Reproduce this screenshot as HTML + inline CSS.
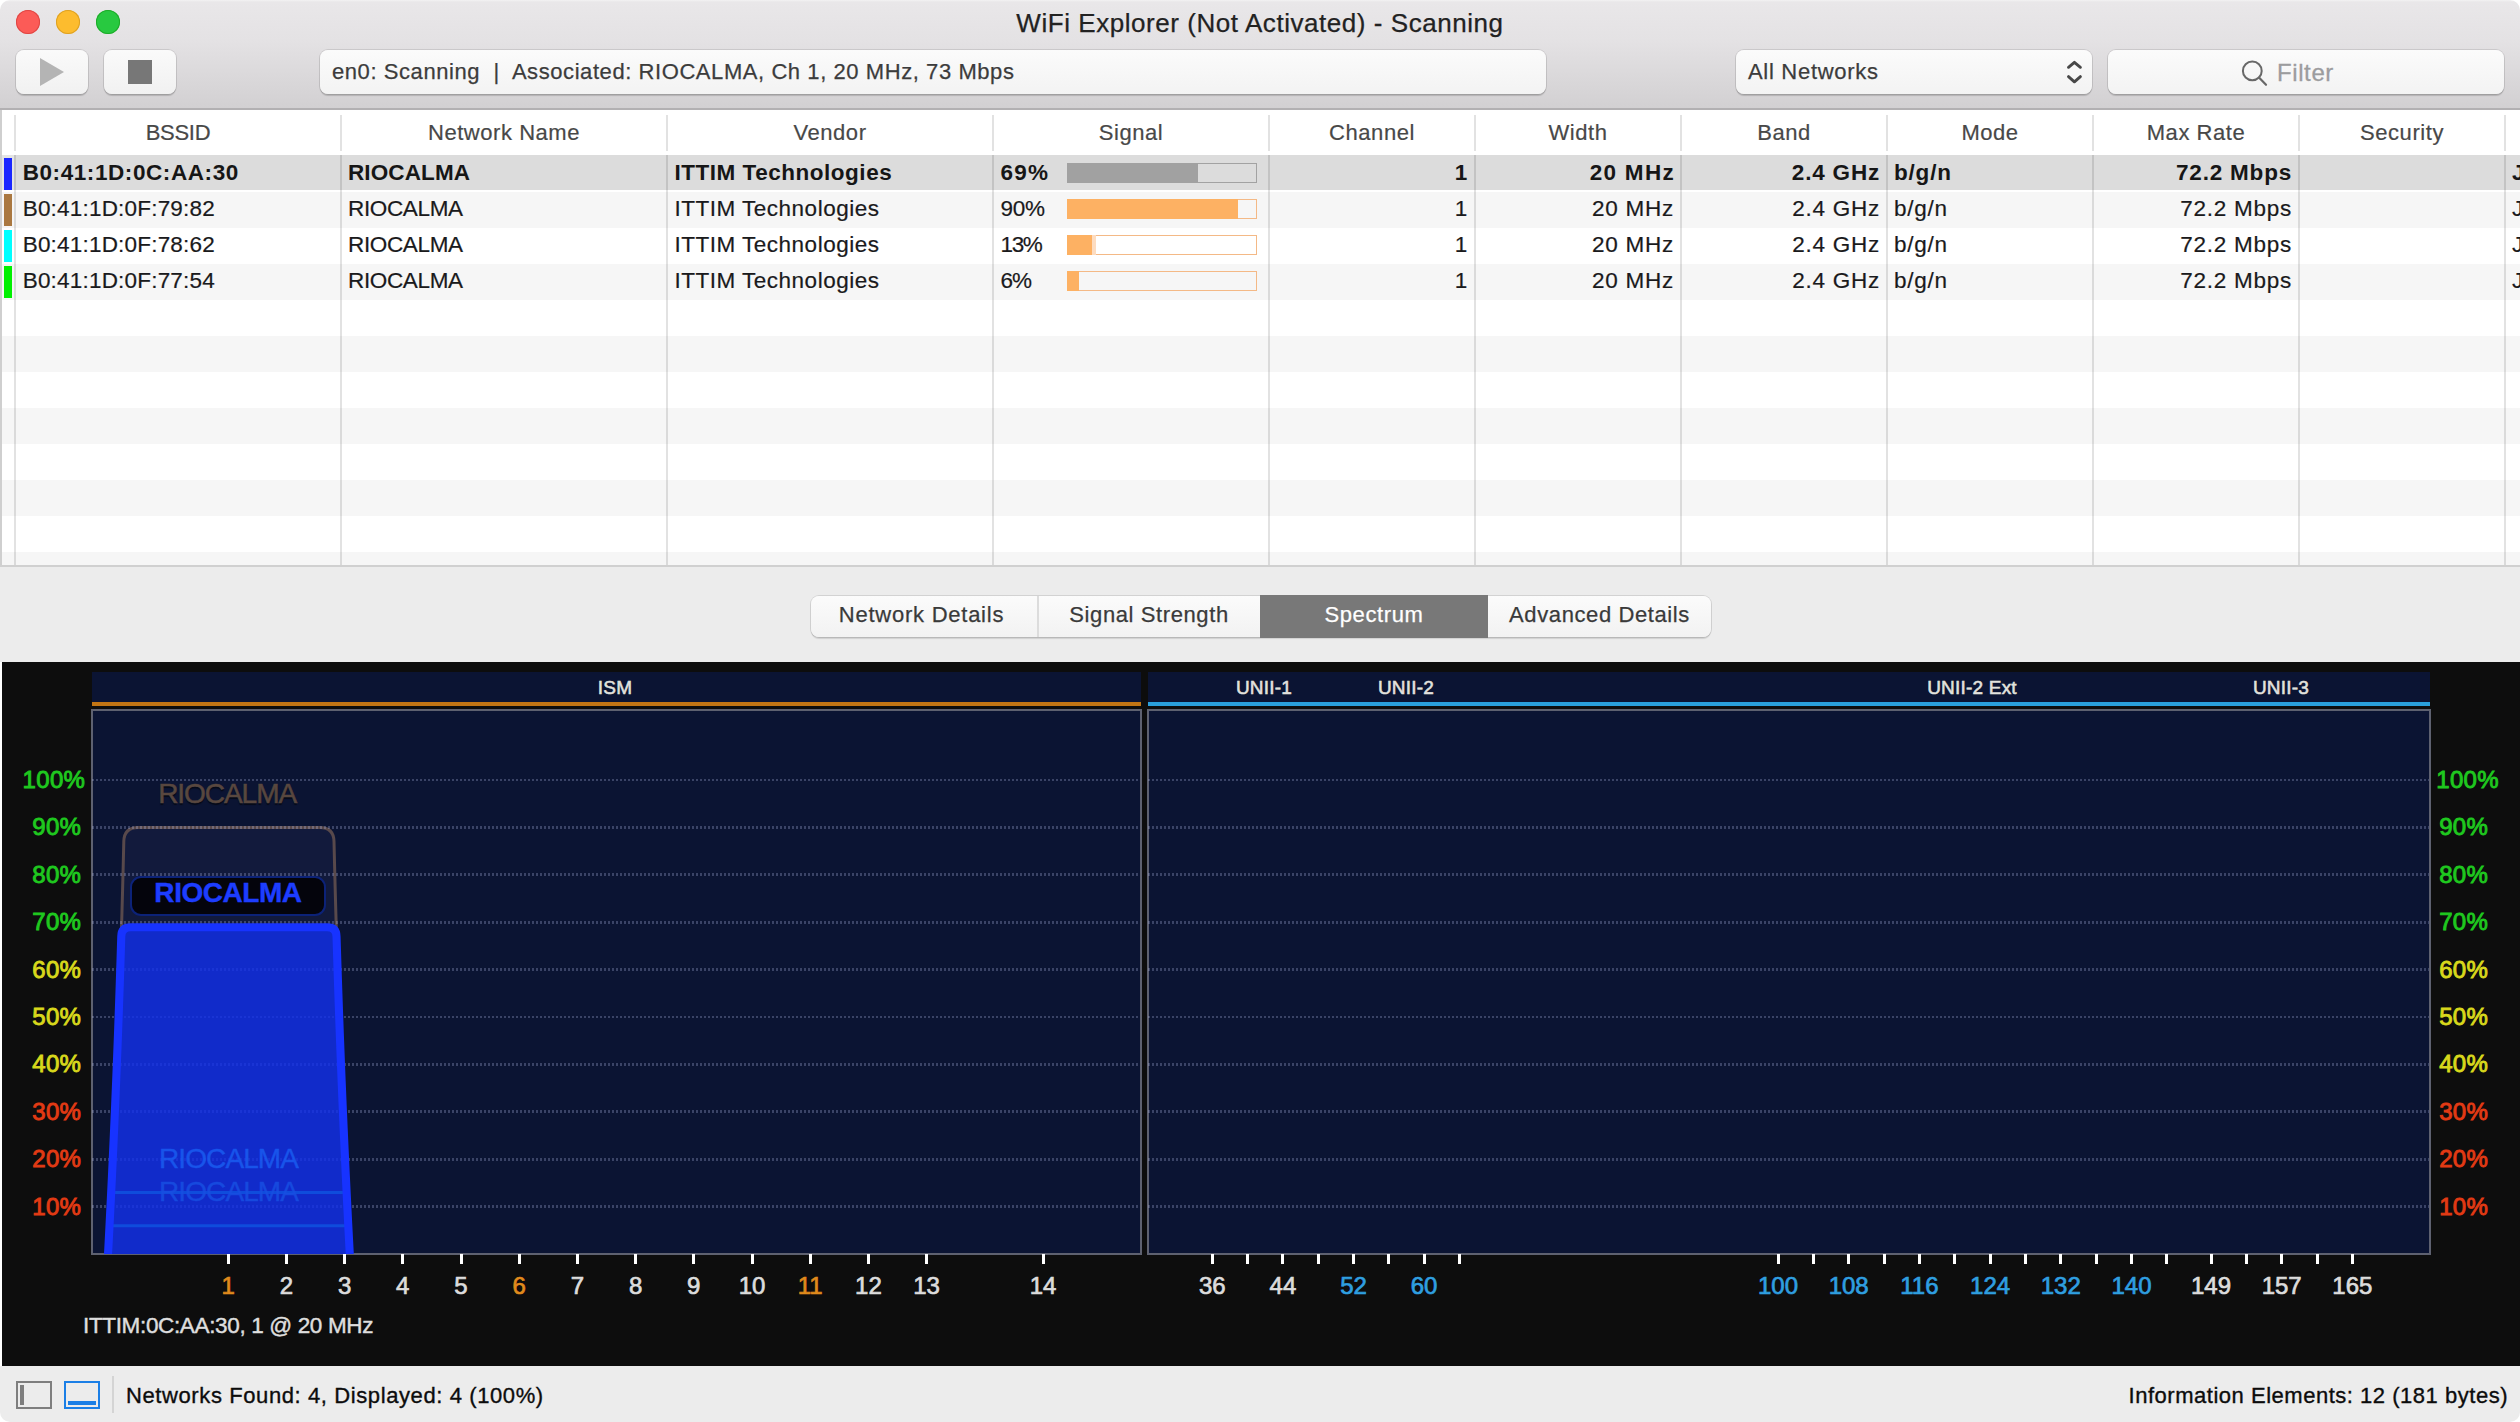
<!DOCTYPE html>
<html>
<head>
<meta charset="utf-8">
<title>WiFi Explorer</title>
<style>
*{box-sizing:border-box;margin:0;padding:0}
html,body{width:2520px;height:1422px;overflow:hidden;background:#fff}
body{font-family:"Liberation Sans",sans-serif;position:relative;color:#1e1e1e}
.abs{position:absolute}
#win{position:absolute;left:0;top:0;width:2520px;height:1422px;overflow:hidden;border-radius:10px 10px 10px 10px;background:#fff}

/* ---------- title / toolbar ---------- */
#tb{left:0;top:0;width:2520px;height:110px;background:linear-gradient(#f3f2f3 0px,#e9e7e9 2px,#e4e2e4 40px,#d2d0d2 108px);border-bottom:2px solid #b2b0b2}
.tl{position:absolute;top:10px;width:24px;height:24px;border-radius:50%}
#title{left:0;top:7px;width:2520px;text-align:center;font-size:26px;line-height:32px;color:#222;letter-spacing:0.55px;-webkit-text-stroke:0.25px #222}
.btn{position:absolute;top:50px;height:44px;border-radius:8px;background:linear-gradient(#fafafa,#f1f1f1);box-shadow:0 0 0 1px rgba(0,0,0,0.10),0 2px 1px rgba(0,0,0,0.16)}
.fld{position:absolute;top:50px;height:44px;border-radius:8px;background:linear-gradient(#fbfbfb,#f3f3f3);box-shadow:0 0 0 1px rgba(0,0,0,0.10),0 2px 1px rgba(0,0,0,0.16);font-size:22px;line-height:44px;color:#3c3c3c;white-space:pre;-webkit-text-stroke:0.25px #3c3c3c}

/* ---------- table ---------- */
#tbl{left:0;top:110px;width:2520px;height:456px;background:#fff;overflow:hidden}
.hd{position:absolute;top:11px;height:24px;line-height:24px;font-size:22px;color:#484848;-webkit-text-stroke:0.2px #484848;text-align:center;letter-spacing:0.55px;white-space:nowrap}
.hs{position:absolute;top:5px;width:2px;height:36px;background:#e2e2e2}
.vs{position:absolute;top:45px;width:2px;height:412px;background:rgba(0,0,0,0.115)}
.row{position:absolute;left:2px;width:2518px;height:36px}
.c{position:absolute;top:0;height:36px;line-height:33px;font-size:22.5px;color:#1a1a1c;white-space:nowrap;letter-spacing:0.75px;-webkit-text-stroke:0.2px #1a1a1c}
.r{text-align:right}
.b .c{font-weight:bold;letter-spacing:0.8px;color:#161616;-webkit-text-stroke:0}
.sw{position:absolute;left:2px;top:2px;width:8px;height:32px}
.bar{position:absolute;left:1065px;top:7px;width:190px;height:20px;box-shadow:inset 0 0 0 1px #f4b986}
.bar i{position:absolute;left:0;top:0;height:20px;background:#fdb163}

/* ---------- tabs ---------- */
#tabs{left:0;top:565px;width:2520px;height:97px;background:#ececec;border-top:2px solid #d0d0d0}
#seg{position:absolute;left:811px;top:29px;width:900px;height:41px;border-radius:8px;background:linear-gradient(#fbfbfb,#f2f2f2);box-shadow:0 0 0 1px rgba(0,0,0,0.11),0 2px 1px rgba(0,0,0,0.12)}
.sg{position:absolute;top:0;height:41px;line-height:37px;font-size:22px;color:#3a3a3a;text-align:center;letter-spacing:0.6px;-webkit-text-stroke:0.25px currentColor}

/* ---------- spectrum ---------- */
#sp{left:2px;top:662px;width:2518px;height:704px;background:#0d0d0d}
.pl{position:absolute;font-size:24px;line-height:24px;height:24px;white-space:nowrap;-webkit-text-stroke:0.9px currentColor;letter-spacing:0.3px}
.cl{position:absolute;top:611px;width:80px;margin-left:-40px;text-align:center;font-size:24px;line-height:26px;color:#dcdcdc;-webkit-text-stroke:0.7px currentColor}
.bl{position:absolute;top:14.5px;font-size:19px;line-height:22px;color:#e2e2de;width:120px;margin-left:-60px;text-align:center;-webkit-text-stroke:0.55px currentColor;letter-spacing:0.2px}

/* ---------- status ---------- */
#st{left:0;top:1366px;width:2520px;height:56px;background:#ececec}
.stt{position:absolute;top:17px;font-size:22px;line-height:26px;color:#0c0c0c;letter-spacing:0.6px;white-space:nowrap;-webkit-text-stroke:0.35px #0c0c0c}
</style>
</head>
<body>
<div id="win">

<!-- TOOLBAR -->
<div id="tb" class="abs">
  <div class="tl" style="left:16px;background:#fc5b57;box-shadow:inset 0 0 0 1px #df4744"></div>
  <div class="tl" style="left:56px;background:#fdbc2e;box-shadow:inset 0 0 0 1px #dea123"></div>
  <div class="tl" style="left:96px;background:#28c940;box-shadow:inset 0 0 0 1px #1eab29"></div>
  <div id="title" class="abs">WiFi Explorer (Not Activated) - Scanning</div>
  <div class="btn" style="left:16px;width:72px">
    <svg class="abs" style="left:0;top:0" width="72" height="44"><path d="M24 8 L48 22 L24 36 Z" fill="#b4b4b4"/></svg>
  </div>
  <div class="btn" style="left:104px;width:72px">
    <div class="abs" style="left:24px;top:10px;width:24px;height:24px;background:#777"></div>
  </div>
  <div class="fld" style="left:320px;width:1226px;padding-left:12px;letter-spacing:0.57px">en0: Scanning  |  Associated: RIOCALMA, Ch 1, 20 MHz, 73 Mbps</div>
  <div class="fld" style="left:1736px;width:356px;padding-left:12px;letter-spacing:0.7px">All Networks
    <svg class="abs" style="left:328px;top:9px" width="20" height="28"><path d="M4.5 8.3 L10.4 3.3 L16.4 8.3 M4.5 17.6 L10.4 22.8 L16.4 17.6" fill="none" stroke="#484848" stroke-width="2.9" stroke-linecap="round" stroke-linejoin="round"/></svg>
  </div>
  <div class="fld" style="left:2108px;width:396px">
    <svg class="abs" style="left:133px;top:10px" width="30" height="30"><circle cx="11.3" cy="10.9" r="9.4" fill="none" stroke="#686868" stroke-width="2"/><path d="M18 17.6 L25 24.8" stroke="#686868" stroke-width="2.2" stroke-linecap="round"/></svg>
    <span class="abs" style="left:169px;top:1px;font-size:24px;color:#9c9c9e;letter-spacing:0.6px;-webkit-text-stroke:0.3px #9c9c9e">Filter</span>
  </div>
</div>

<!-- TABLE -->
<div id="tbl" class="abs">
  <div class="abs" style="left:0;top:0;width:2px;height:457px;background:#cfcfcf"></div>
  <div class="row b" style="top:46px;background:transparent"><div class="abs" style="left:0;top:-1px;width:12px;height:35px;background:#e4e4e4"></div><div class="abs" style="left:12px;top:-1px;width:2506px;height:35px;background:#dcdcdc"></div><div class="sw" style="background:#1a26ff"></div><div class="c" style="left:20.7px;letter-spacing:0.58px">B0:41:1D:0C:AA:30</div><div class="c" style="left:346px;letter-spacing:0.12px">RIOCALMA</div><div class="c" style="left:672.5px;letter-spacing:0.52px">ITTIM Technologies</div><div class="c" style="left:998.5px;letter-spacing:1.2px">69%</div><div class="bar" style="box-shadow:inset 0 0 0 1px #a2a2a2"><i style="width:130.8px;background:#a1a1a1"></i></div><div class="c r" style="left:1268px;width:198px">1</div><div class="c r" style="left:1474px;width:198px;letter-spacing:1.3px;width:199px">20 MHz</div><div class="c r" style="left:1680px;width:198px">2.4 GHz</div><div class="c" style="left:1892px">b/g/n</div><div class="c r" style="left:2092px;width:198px">72.2 Mbps</div><div class="c" style="left:2510px">J</div></div>
  <div class="row" style="top:82px;background:#f6f6f6"><div class="sw" style="background:#aa7840"></div><div class="c" style="left:20.7px;letter-spacing:0.2px">B0:41:1D:0F:79:82</div><div class="c" style="left:346px;letter-spacing:-0.35px">RIOCALMA</div><div class="c" style="left:672.5px;letter-spacing:0.5px">ITTIM Technologies</div><div class="c" style="left:998.5px;letter-spacing:-0.3px">90%</div><div class="bar"><i style="width:170.6px"></i></div><div class="c r" style="left:1268px;width:198px">1</div><div class="c r" style="left:1474px;width:198px">20 MHz</div><div class="c r" style="left:1680px;width:198px">2.4 GHz</div><div class="c" style="left:1892px">b/g/n</div><div class="c r" style="left:2092px;width:198px">72.2 Mbps</div><div class="c" style="left:2510px">J</div></div>
  <div class="row" style="top:118px;background:#ffffff"><div class="sw" style="background:#00ffff"></div><div class="c" style="left:20.7px;letter-spacing:0.2px">B0:41:1D:0F:78:62</div><div class="c" style="left:346px;letter-spacing:-0.35px">RIOCALMA</div><div class="c" style="left:672.5px;letter-spacing:0.5px">ITTIM Technologies</div><div class="c" style="left:998.5px;letter-spacing:-1.35px">13%</div><div class="bar"><i style="width:24.6px"></i><i style="left:24.7px;width:4px;background:#fddcc0"></i></div><div class="c r" style="left:1268px;width:198px">1</div><div class="c r" style="left:1474px;width:198px">20 MHz</div><div class="c r" style="left:1680px;width:198px">2.4 GHz</div><div class="c" style="left:1892px">b/g/n</div><div class="c r" style="left:2092px;width:198px">72.2 Mbps</div><div class="c" style="left:2510px">J</div></div>
  <div class="row" style="top:154px;background:#f6f6f6"><div class="sw" style="background:#00f000"></div><div class="c" style="left:20.7px;letter-spacing:0.2px">B0:41:1D:0F:77:54</div><div class="c" style="left:346px;letter-spacing:-0.35px">RIOCALMA</div><div class="c" style="left:672.5px;letter-spacing:0.5px">ITTIM Technologies</div><div class="c" style="left:998.5px;letter-spacing:-1.0px">6%</div><div class="bar"><i style="width:12.0px"></i></div><div class="c r" style="left:1268px;width:198px">1</div><div class="c r" style="left:1474px;width:198px">20 MHz</div><div class="c r" style="left:1680px;width:198px">2.4 GHz</div><div class="c" style="left:1892px">b/g/n</div><div class="c r" style="left:2092px;width:198px">72.2 Mbps</div><div class="c" style="left:2510px">J</div></div>
  <div class="row" style="top:190px;background:#ffffff"></div>
  <div class="row" style="top:226px;background:#f6f6f6"></div>
  <div class="row" style="top:262px;background:#ffffff"></div>
  <div class="row" style="top:298px;background:#f6f6f6"></div>
  <div class="row" style="top:334px;background:#ffffff"></div>
  <div class="row" style="top:370px;background:#f6f6f6"></div>
  <div class="row" style="top:406px;background:#ffffff"></div>
  <div class="row" style="top:442px;background:#f6f6f6"></div>
  <div class="hs" style="left:14px"></div>
  <div class="vs" style="left:14px"></div>
  <div class="hs" style="left:340px"></div>
  <div class="vs" style="left:340px"></div>
  <div class="hs" style="left:666px"></div>
  <div class="vs" style="left:666px"></div>
  <div class="hs" style="left:992px"></div>
  <div class="vs" style="left:992px"></div>
  <div class="hs" style="left:1268px"></div>
  <div class="vs" style="left:1268px"></div>
  <div class="hs" style="left:1474px"></div>
  <div class="vs" style="left:1474px"></div>
  <div class="hs" style="left:1680px"></div>
  <div class="vs" style="left:1680px"></div>
  <div class="hs" style="left:1886px"></div>
  <div class="vs" style="left:1886px"></div>
  <div class="hs" style="left:2092px"></div>
  <div class="vs" style="left:2092px"></div>
  <div class="hs" style="left:2298px"></div>
  <div class="vs" style="left:2298px"></div>
  <div class="hs" style="left:2504px"></div>
  <div class="vs" style="left:2504px"></div>
  <div class="hd" style="left:16px;width:324px;letter-spacing:-0.3px">BSSID</div>
  <div class="hd" style="left:342px;width:324px">Network Name</div>
  <div class="hd" style="left:668px;width:324px">Vendor</div>
  <div class="hd" style="left:994px;width:274px">Signal</div>
  <div class="hd" style="left:1270px;width:204px">Channel</div>
  <div class="hd" style="left:1476px;width:204px">Width</div>
  <div class="hd" style="left:1682px;width:204px">Band</div>
  <div class="hd" style="left:1888px;width:204px">Mode</div>
  <div class="hd" style="left:2094px;width:204px">Max Rate</div>
  <div class="hd" style="left:2300px;width:204px">Security</div>
</div>

<!-- TABS -->
<div id="tabs" class="abs">
  <div id="seg">
    <div class="sg" style="left:0;width:221px;letter-spacing:0.75px">Network Details</div>
    <div class="abs" style="left:226px;top:0;width:2px;height:41px;background:#dcdcdc"></div>
    <div class="sg" style="left:227px;width:222px">Signal Strength</div>
    <div class="sg" style="left:449px;width:228px;background:#787878;color:#fff;height:43px;top:-1px;line-height:39px">Spectrum</div>
    <div class="sg" style="left:677px;width:223px">Advanced Details</div>
  </div>
</div>

<!-- SPECTRUM -->
<div id="sp" class="abs">
  <div class="abs" style="left:90px;top:10px;width:1049px;height:30px;background:#0b1433"></div>
  <div class="abs" style="left:90px;top:40px;width:1049px;height:4px;background:#c27514"></div>
  <div class="abs" style="left:1146px;top:10px;width:1282px;height:30px;background:#0b1433"></div>
  <div class="abs" style="left:1146px;top:40px;width:1282px;height:4px;background:#2a9fdc"></div>
  <div class="bl" style="left:613px">ISM</div>
  <div class="bl" style="left:1262px">UNII-1</div>
  <div class="bl" style="left:1404px">UNII-2</div>
  <div class="bl" style="left:1970px">UNII-2 Ext</div>
  <div class="bl" style="left:2279px">UNII-3</div>
  <div class="abs" style="left:89px;top:47px;width:1051px;height:546px;background:#0b1433;border:2px solid #5e6170"></div>
  <div class="abs" style="left:1145px;top:47px;width:1284px;height:546px;background:#0b1433;border:2px solid #5e6170"></div>
  <svg class="abs" style="left:0;top:0" width="2518" height="704" viewBox="2 662 2518 704">
  <defs><clipPath id="cl"><rect x="93" y="711" width="1047" height="543"/></clipPath></defs>
  <g clip-path="url(#cl)">
  <path d="M107.17 1270.0 L108.28 1249.4 L109.53 1225.4 L110.74 1201.4 L111.90 1177.4 L113.03 1153.4 L114.11 1129.4 L115.15 1105.4 L116.15 1081.4 L117.10 1057.4 L118.01 1033.4 L118.89 1009.4 L119.71 985.4 L120.50 961.4 L121.24 937.4 L121.94 913.4 L122.60 889.4 L123.22 865.4 L123.80 841.4 Q124.11 827.4 138.11 827.4 L319.69 827.4 Q333.69 827.4 334.00 841.4 L334.58 865.4 L335.20 889.4 L335.86 913.4 L336.56 937.4 L337.30 961.4 L338.09 985.4 L338.91 1009.4 L339.79 1033.4 L340.70 1057.4 L341.65 1081.4 L342.65 1105.4 L343.69 1129.4 L344.77 1153.4 L345.90 1177.4 L347.06 1201.4 L348.27 1225.4 L349.52 1249.4 L350.63 1270.0 Z" fill="#121a3c" stroke="#58494b" stroke-width="3"/>
  </g>
  <g stroke="rgba(200,206,255,0.25)" stroke-dasharray="2 2" fill="none"><path stroke-width="3" d="M92 1206.5 H1140 M1148 1206.5 H2429"/><path stroke-width="3" d="M92 1159.5 H1140 M1148 1159.5 H2429"/><path stroke-width="3" d="M92 1111.5 H1140 M1148 1111.5 H2429"/><path stroke-width="3" d="M92 1064.5 H1140 M1148 1064.5 H2429"/><path stroke-width="2" d="M92 1017 H1140 M1148 1017 H2429"/><path stroke-width="3" d="M92 969.5 H1140 M1148 969.5 H2429"/><path stroke-width="3" d="M92 922.5 H1140 M1148 922.5 H2429"/><path stroke-width="3" d="M92 874.5 H1140 M1148 874.5 H2429"/><path stroke-width="3" d="M92 827.5 H1140 M1148 827.5 H2429"/><path stroke-width="2" d="M92 780 H1140 M1148 780 H2429"/></g>
  <g clip-path="url(#cl)">
  <path d="M107.17 1270.0 L108.34 1248.3 L109.59 1224.3 L110.79 1200.3 L111.96 1176.3 L113.08 1152.3 L114.16 1128.3 L115.20 1104.3 L116.19 1080.3 L117.14 1056.3 L118.06 1032.3 L118.92 1008.3 L119.75 984.3 L120.53 960.3 L121.28 936.3 Q121.54 927.3 130.54 927.3 L327.26 927.3 Q336.26 927.3 336.52 936.3 L337.27 960.3 L338.05 984.3 L338.88 1008.3 L339.74 1032.3 L340.66 1056.3 L341.61 1080.3 L342.60 1104.3 L343.64 1128.3 L344.72 1152.3 L345.84 1176.3 L347.01 1200.3 L348.21 1224.3 L349.46 1248.3 L350.63 1270.0 Z" fill="rgba(18,47,237,0.8)" stroke="none"/>
  <path d="M110 1192.5 H347 M110 1225.7 H347" stroke="#0f4cdc" stroke-width="3" fill="none"/>
  <path d="M107.17 1270.0 L108.34 1248.3 L109.59 1224.3 L110.79 1200.3 L111.96 1176.3 L113.08 1152.3 L114.16 1128.3 L115.20 1104.3 L116.19 1080.3 L117.14 1056.3 L118.06 1032.3 L118.92 1008.3 L119.75 984.3 L120.53 960.3 L121.28 936.3 Q121.54 927.3 130.54 927.3 L327.26 927.3 Q336.26 927.3 336.52 936.3 L337.27 960.3 L338.05 984.3 L338.88 1008.3 L339.74 1032.3 L340.66 1056.3 L341.61 1080.3 L342.60 1104.3 L343.64 1128.3 L344.72 1152.3 L345.84 1176.3 L347.01 1200.3 L348.21 1224.3 L349.46 1248.3 L350.63 1270.0 Z" fill="none" stroke="#1733ff" stroke-width="8.1" stroke-linejoin="round"/>
  </g>
  </svg>
  <div class="abs" style="left:156.2px;top:117.79999999999995px;font-size:28px;line-height:28px;color:#58473f;letter-spacing:-1.05px;-webkit-text-stroke:0.55px #58473f;text-shadow:0 1.5px 1px rgba(0,0,0,0.55)">RIOCALMA</div>
  <div class="abs" style="left:128px;top:213.79999999999995px;width:196px;height:40.5px;border-radius:11px;background:#04040c;border:2px solid #0c2278;text-align:center;font-size:28px;line-height:30.5px;-webkit-text-stroke:0.4px #1d3dff;font-weight:bold;color:#1d3dff;letter-spacing:-0.45px">RIOCALMA</div>
  <div class="abs" style="left:157px;top:483px;font-size:28px;line-height:28px;color:#1a5cf0;letter-spacing:-0.9px;opacity:0.85;-webkit-text-stroke:0.4px #1a5cf0">RIOCALMA</div>
  <div class="abs" style="left:157px;top:516px;font-size:28px;line-height:28px;color:#184fe2;letter-spacing:-0.9px;opacity:0.85;-webkit-text-stroke:0.4px #184fe2">RIOCALMA</div>
  <div class="pl" style="left:30.3px;top:532.6px;color:#e23a14">10%</div>
  <div class="pl" style="left:2437.2px;top:532.6px;color:#e23a14">10%</div>
  <div class="pl" style="left:30.3px;top:485.2px;color:#e23a14">20%</div>
  <div class="pl" style="left:2437.2px;top:485.2px;color:#e23a14">20%</div>
  <div class="pl" style="left:30.3px;top:437.8px;color:#e23a14">30%</div>
  <div class="pl" style="left:2437.2px;top:437.8px;color:#e23a14">30%</div>
  <div class="pl" style="left:30.3px;top:390.4px;color:#d8d81c">40%</div>
  <div class="pl" style="left:2437.2px;top:390.4px;color:#d8d81c">40%</div>
  <div class="pl" style="left:30.3px;top:343.0px;color:#d8d81c">50%</div>
  <div class="pl" style="left:2437.2px;top:343.0px;color:#d8d81c">50%</div>
  <div class="pl" style="left:30.3px;top:295.6px;color:#d8d81c">60%</div>
  <div class="pl" style="left:2437.2px;top:295.6px;color:#d8d81c">60%</div>
  <div class="pl" style="left:30.3px;top:248.2px;color:#1fc81f">70%</div>
  <div class="pl" style="left:2437.2px;top:248.2px;color:#1fc81f">70%</div>
  <div class="pl" style="left:30.3px;top:200.8px;color:#1fc81f">80%</div>
  <div class="pl" style="left:2437.2px;top:200.8px;color:#1fc81f">80%</div>
  <div class="pl" style="left:30.3px;top:153.4px;color:#1fc81f">90%</div>
  <div class="pl" style="left:2437.2px;top:153.4px;color:#1fc81f">90%</div>
  <div class="pl" style="left:20.6px;top:106.0px;color:#1fc81f">100%</div>
  <div class="pl" style="left:2434.3px;top:106.0px;color:#1fc81f">100%</div>
  <div class="abs" style="left:224.7px;top:592px;width:3px;height:10px;background:#fff"></div>
  <div class="abs" style="left:282.9px;top:592px;width:3px;height:10px;background:#fff"></div>
  <div class="abs" style="left:341.1px;top:592px;width:3px;height:10px;background:#fff"></div>
  <div class="abs" style="left:399.3px;top:592px;width:3px;height:10px;background:#fff"></div>
  <div class="abs" style="left:457.5px;top:592px;width:3px;height:10px;background:#fff"></div>
  <div class="abs" style="left:515.7px;top:592px;width:3px;height:10px;background:#fff"></div>
  <div class="abs" style="left:573.9px;top:592px;width:3px;height:10px;background:#fff"></div>
  <div class="abs" style="left:632.1px;top:592px;width:3px;height:10px;background:#fff"></div>
  <div class="abs" style="left:690.3px;top:592px;width:3px;height:10px;background:#fff"></div>
  <div class="abs" style="left:748.5px;top:592px;width:3px;height:10px;background:#fff"></div>
  <div class="abs" style="left:806.7px;top:592px;width:3px;height:10px;background:#fff"></div>
  <div class="abs" style="left:864.9px;top:592px;width:3px;height:10px;background:#fff"></div>
  <div class="abs" style="left:923.1px;top:592px;width:3px;height:10px;background:#fff"></div>
  <div class="abs" style="left:1039.5px;top:592px;width:3px;height:10px;background:#fff"></div>
  <div class="abs" style="left:1208.8px;top:592px;width:3px;height:10px;background:#fff"></div>
  <div class="abs" style="left:1244.1px;top:592px;width:3px;height:10px;background:#fff"></div>
  <div class="abs" style="left:1279.4px;top:592px;width:3px;height:10px;background:#fff"></div>
  <div class="abs" style="left:1314.7px;top:592px;width:3px;height:10px;background:#fff"></div>
  <div class="abs" style="left:1350.0px;top:592px;width:3px;height:10px;background:#fff"></div>
  <div class="abs" style="left:1385.3px;top:592px;width:3px;height:10px;background:#fff"></div>
  <div class="abs" style="left:1420.6px;top:592px;width:3px;height:10px;background:#fff"></div>
  <div class="abs" style="left:1455.9px;top:592px;width:3px;height:10px;background:#fff"></div>
  <div class="abs" style="left:1774.5px;top:592px;width:3px;height:10px;background:#fff"></div>
  <div class="abs" style="left:1809.8px;top:592px;width:3px;height:10px;background:#fff"></div>
  <div class="abs" style="left:1845.2px;top:592px;width:3px;height:10px;background:#fff"></div>
  <div class="abs" style="left:1880.5px;top:592px;width:3px;height:10px;background:#fff"></div>
  <div class="abs" style="left:1915.9px;top:592px;width:3px;height:10px;background:#fff"></div>
  <div class="abs" style="left:1951.2px;top:592px;width:3px;height:10px;background:#fff"></div>
  <div class="abs" style="left:1986.6px;top:592px;width:3px;height:10px;background:#fff"></div>
  <div class="abs" style="left:2022.0px;top:592px;width:3px;height:10px;background:#fff"></div>
  <div class="abs" style="left:2057.3px;top:592px;width:3px;height:10px;background:#fff"></div>
  <div class="abs" style="left:2092.7px;top:592px;width:3px;height:10px;background:#fff"></div>
  <div class="abs" style="left:2128.0px;top:592px;width:3px;height:10px;background:#fff"></div>
  <div class="abs" style="left:2163.3px;top:592px;width:3px;height:10px;background:#fff"></div>
  <div class="abs" style="left:2207.5px;top:592px;width:3px;height:10px;background:#fff"></div>
  <div class="abs" style="left:2242.8px;top:592px;width:3px;height:10px;background:#fff"></div>
  <div class="abs" style="left:2278.2px;top:592px;width:3px;height:10px;background:#fff"></div>
  <div class="abs" style="left:2313.6px;top:592px;width:3px;height:10px;background:#fff"></div>
  <div class="abs" style="left:2348.9px;top:592px;width:3px;height:10px;background:#fff"></div>
  <div class="cl" style="left:226.2px;color:#e08a1c">1</div>
  <div class="cl" style="left:284.4px;color:#dcdcdc">2</div>
  <div class="cl" style="left:342.6px;color:#dcdcdc">3</div>
  <div class="cl" style="left:400.8px;color:#dcdcdc">4</div>
  <div class="cl" style="left:459.0px;color:#dcdcdc">5</div>
  <div class="cl" style="left:517.2px;color:#e08a1c">6</div>
  <div class="cl" style="left:575.4px;color:#dcdcdc">7</div>
  <div class="cl" style="left:633.6px;color:#dcdcdc">8</div>
  <div class="cl" style="left:691.8px;color:#dcdcdc">9</div>
  <div class="cl" style="left:750.0px;color:#dcdcdc">10</div>
  <div class="cl" style="left:808.2px;color:#e08a1c">11</div>
  <div class="cl" style="left:866.4px;color:#dcdcdc">12</div>
  <div class="cl" style="left:924.6px;color:#dcdcdc">13</div>
  <div class="cl" style="left:1041.0px;color:#dcdcdc">14</div>
  <div class="cl" style="left:1210.3px;color:#dcdcdc">36</div>
  <div class="cl" style="left:1280.9px;color:#dcdcdc">44</div>
  <div class="cl" style="left:1351.5px;color:#2f9fe0">52</div>
  <div class="cl" style="left:1422.1px;color:#2f9fe0">60</div>
  <div class="cl" style="left:1776.0px;color:#2f9fe0">100</div>
  <div class="cl" style="left:1846.7px;color:#2f9fe0">108</div>
  <div class="cl" style="left:1917.4px;color:#2f9fe0">116</div>
  <div class="cl" style="left:1988.1px;color:#2f9fe0">124</div>
  <div class="cl" style="left:2058.8px;color:#2f9fe0">132</div>
  <div class="cl" style="left:2129.5px;color:#2f9fe0">140</div>
  <div class="cl" style="left:2209.0px;color:#dcdcdc">149</div>
  <div class="cl" style="left:2279.7px;color:#dcdcdc">157</div>
  <div class="cl" style="left:2350.4px;color:#dcdcdc">165</div>
  <div class="abs" style="left:81px;top:651px;font-size:22.5px;line-height:26px;color:#dedede;letter-spacing:-0.35px;white-space:nowrap;-webkit-text-stroke:0.45px #dedede">ITTIM:0C:AA:30, 1 @ 20 MHz</div>
</div>

<!-- STATUS -->
<div id="st" class="abs">
  <div class="abs" style="left:16px;top:15px;width:36px;height:28px;border:2px solid #7e7e7e"><div class="abs" style="left:2px;top:2px;width:4px;height:20px;background:#7e7e7e"></div></div>
  <div class="abs" style="left:64px;top:15px;width:36px;height:28px;border:2px solid #1b7fe6"><div class="abs" style="left:2px;top:18px;width:28px;height:4px;background:#1b7fe6"></div></div>
  <div class="abs" style="left:112px;top:10px;width:2px;height:37px;background:#d4d4d4"></div>
  <div class="stt" style="left:126px">Networks Found: 4, Displayed: 4 (100%)</div>
  <div class="stt" style="right:12px;letter-spacing:0.52px">Information Elements: 12 (181 bytes)</div>
</div>

</div>
</body>
</html>
